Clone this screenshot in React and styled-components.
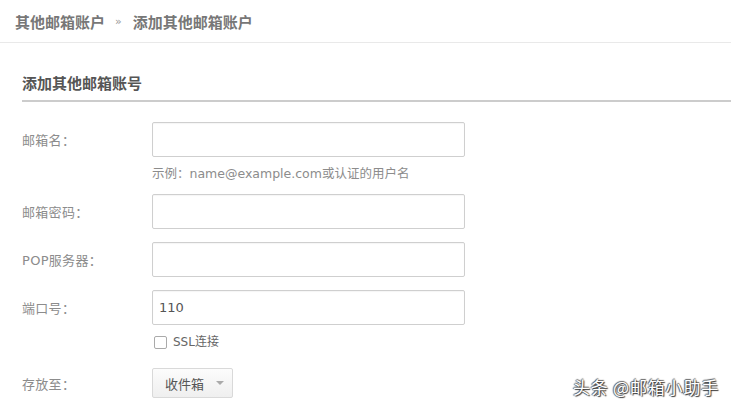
import styled, { createGlobalStyle } from "styled-components";

const GlobalStyle = createGlobalStyle`
  html, body {
    margin: 0;
    padding: 0;
    background: #fff;
    font-family: "DejaVu Sans", "Noto Sans CJK SC", sans-serif;
  }
`;

const Page = styled.div`
  position: relative;
  width: 731px;
  height: 413px;
  overflow: hidden;
  background: #fff;
`;

const Breadcrumb = styled.div`
  height: 42px;
  display: flex;
  align-items: center;
  padding-left: 15px;
  border-bottom: 1px solid #e9e9e9;
  font-size: 15px;
  font-weight: bold;
  color: #777;
`;

const Sep = styled.span`
  font-size: 11px;
  font-weight: normal;
  color: #999;
  margin: 0 11px 0 10px;
`;

const Section = styled.div`
  margin-left: 22px;
`;

const SectionTitle = styled.h2`
  margin: 0;
  padding: 31px 0 6px;
  line-height: 20px;
  font-size: 15px;
  font-weight: bold;
  color: #555;
  border-bottom: 2px solid #ccc;
`;

const Form = styled.div`
  padding: 20px 0 0 22px;
  display: flex;
  flex-direction: column;
`;

const Row = styled.div`
  display: grid;
  grid-template-columns: 130px 1fr;
  align-items: center;
  margin-bottom: ${(p) => p.$gap || 0}px;
`;

const Label = styled.label`
  font-size: 13px;
  color: #8c8c8c;
  letter-spacing: 0.3px;
`;

const Input = styled.input`
  box-sizing: border-box;
  width: 313px;
  height: 35px;
  border: 1px solid #cfcfcf;
  border-radius: 2px;
  padding: 0 6px;
  font-size: 13px;
  font-family: "DejaVu Sans", "Noto Sans CJK SC", sans-serif;
  color: #555;
  outline: none;
  box-shadow: inset 0 1px 1px rgba(0, 0, 0, 0.04);
`;

const Hint = styled.div`
  grid-column: 2;
  margin-top: 8px;
  line-height: 18px;
  font-size: 12.5px;
  color: #8c8c8c;
`;

const Check = styled.label`
  grid-column: 2;
  display: flex;
  align-items: center;
  gap: 6px;
  margin-top: 9px;
  line-height: 16px;
  font-size: 12px;
  color: #666;
  padding-left: 2px;
`;

const Box = styled.span`
  width: 11px;
  height: 11px;
  border: 1px solid #aaa;
  border-radius: 2px;
  background: #fff;
`;

const SelectButton = styled.button`
  box-sizing: border-box;
  display: flex;
  align-items: center;
  gap: 12px;
  width: 81px;
  height: 30px;
  padding: 0 0 0 12px;
  border: 1px solid #d9d9d9;
  border-radius: 2px;
  background: linear-gradient(#fcfcfc, #efefef);
  font-size: 13px;
  font-family: "DejaVu Sans", "Noto Sans CJK SC", sans-serif;
  color: #555;
`;

const Caret = styled.span`
  width: 0;
  height: 0;
  border-left: 4px solid transparent;
  border-right: 4px solid transparent;
  border-top: 4px solid #aaa;
`;

const Watermark = styled.div`
  position: absolute;
  right: 12px;
  bottom: 14px;
  font-family: "Noto Sans CJK SC", sans-serif;
  font-size: 17px;
  color: #fff;
  text-shadow: 1px 1px 1px #333, -1px 0 1px #555, 0 -1px 1px #666;
  letter-spacing: 0.8px;
`;

const fields = [
  { label: "邮箱名：", hint: "示例：name@example.com或认证的用户名" },
  { label: "邮箱密码：" },
  { label: "POP服务器：" },
  { label: "端口号：", value: "110", ssl: true },
];

export default function App() {
  return (
    <Page>
      <GlobalStyle />
      <Breadcrumb>
        其他邮箱账户<Sep>»</Sep>添加其他邮箱账户
      </Breadcrumb>
      <Section>
        <SectionTitle>添加其他邮箱账号</SectionTitle>
      </Section>
      <Form>
        {fields.map((f, i) => (
          <Row key={f.label} $gap={f.hint ? 11 : f.ssl ? 18 : 13}>
            <Label>{f.label}</Label>
            <Input defaultValue={f.value || ""} type={i === 1 ? "password" : "text"} />
            {f.hint && <Hint>{f.hint}</Hint>}
            {f.ssl && (
              <Check>
                <Box />
                SSL连接
              </Check>
            )}
          </Row>
        ))}
        <Row>
          <Label>存放至：</Label>
          <SelectButton>
            收件箱
            <Caret />
          </SelectButton>
        </Row>
      </Form>
      <Watermark>头条 @邮箱小助手</Watermark>
    </Page>
  );
}
